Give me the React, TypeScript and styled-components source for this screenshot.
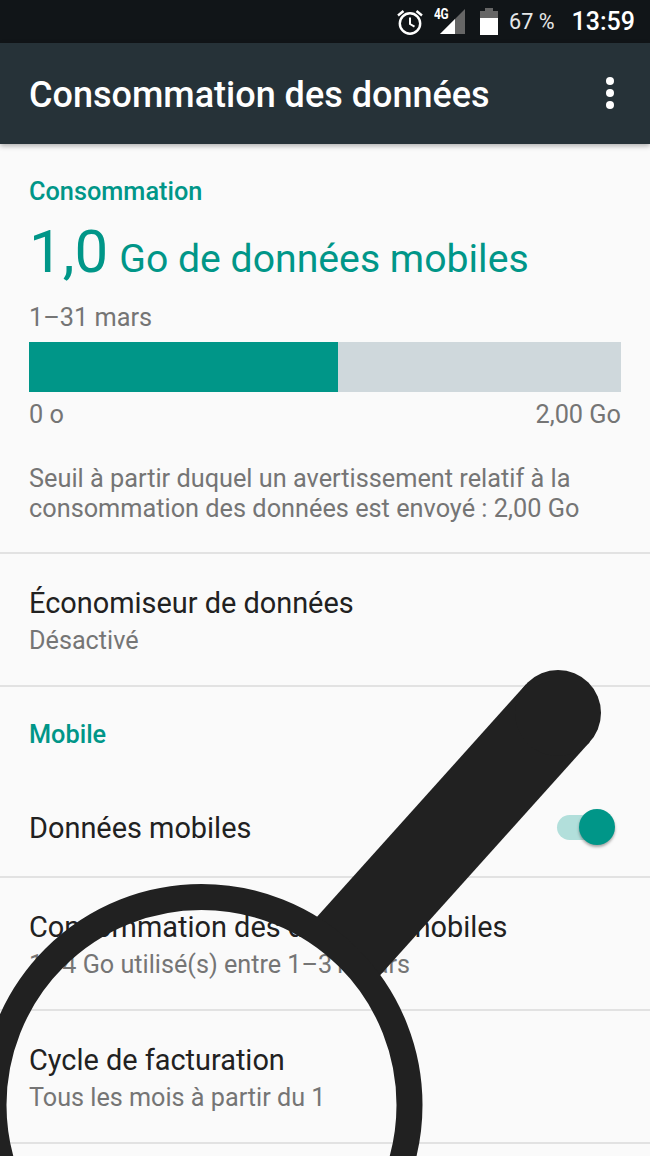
import styled, { createGlobalStyle } from 'styled-components';

const GlobalStyle = createGlobalStyle`
  html, body {
    margin: 0;
    padding: 0;
    background: #fafafa;
  }
  * {
    box-sizing: border-box;
  }
`;

const Screen = styled.div`
  position: relative;
  width: 650px;
  height: 1156px;
  overflow: hidden;
  background: #fafafa;
  font-family: Roboto, "Noto Sans", sans-serif;
`;

const StatusBar = styled.div`
  height: 43px;
  background: #111518;
  color: #fff;
  display: flex;
  align-items: center;
  justify-content: flex-end;
  padding-right: 15px;
`;

const AlarmIcon = styled.svg`
  width: 28px;
  height: 28px;
  margin-right: 9px;
`;

const NetworkIcon = styled.div`
  position: relative;
  width: 32px;
  height: 26px;
  margin-right: 15px;
`;

const NetworkLabel = styled.span`
  position: absolute;
  left: 1px;
  top: -1px;
  font-size: 14px;
  font-weight: 700;
  line-height: 13px;
  letter-spacing: -0.5px;
  transform: scaleX(0.85);
  transform-origin: left center;
`;

const SignalSvg = styled.svg`
  position: absolute;
  right: 0;
  top: 0;
  width: 25px;
  height: 26px;
`;

const BatteryIcon = styled.svg`
  width: 18px;
  height: 27px;
  margin-right: 11px;
`;

const BatteryText = styled.span`
  font-size: 21.6px;
  color: #e6e8e9;
  margin-right: 17px;
`;

const Clock = styled.span`
  font-size: 25px;
  font-weight: 500;
`;

const AppBar = styled.header`
  height: 101px;
  background: #263238;
  display: flex;
  align-items: center;
  justify-content: space-between;
  padding: 3px 36px 0 29px;
  box-shadow: 0 2px 5px rgba(0, 0, 0, 0.3);
  position: relative;
`;

const Title = styled.h1`
  margin: 0;
  font-size: 36px;
  font-weight: 500;
  color: #fff;
`;

const MoreDots = styled.div`
  display: flex;
  flex-direction: column;
  gap: 4px;
  margin-top: -4px;
`;

const Dot = styled.span`
  width: 8px;
  height: 8px;
  border-radius: 50%;
  background: #fff;
`;

const UsageSection = styled.section`
  height: 410px;
  padding: 34px 29px 0;
  border-bottom: 2px solid #e2e2e2;
`;

const SectionLabel = styled.div`
  font-size: 25.3px;
  line-height: 28px;
  font-weight: 500;
  color: #009688;
`;

const UsageLine = styled.div`
  display: flex;
  align-items: baseline;
  gap: 11px;
  color: #009688;
  margin-top: 13px;
  height: 72px;
`;

const UsageValue = styled.span`
  font-size: 60px;
  line-height: 66px;
`;

const UsageUnit = styled.span`
  font-size: 39.2px;
`;

const Period = styled.div`
  font-size: 25.3px;
  line-height: 28px;
  color: #757575;
  margin-top: 13px;
`;

const Bar = styled.div`
  height: 50px;
  background: #cfd8dc;
  margin-top: 10px;
`;

const BarFill = styled.div<{ $pct: number }>`
  height: 100%;
  width: ${(p) => p.$pct}%;
  background: #009688;
`;

const BarScale = styled.div`
  display: flex;
  justify-content: space-between;
  font-size: 25.3px;
  line-height: 28px;
  color: #757575;
  margin-top: 9px;
`;

const Warning = styled.p`
  margin: 35px 0 0;
  font-size: 25.3px;
  line-height: 29.5px;
  color: #757575;
`;

const Row = styled.div<{ $height: number; $center?: boolean }>`
  height: ${(p) => p.$height}px;
  padding: ${(p) => (p.$center ? '0 29px' : '2px 29px 0')};
  border-bottom: 2px solid #e2e2e2;
  display: flex;
  flex-direction: ${(p) => (p.$center ? 'row' : 'column')};
  justify-content: ${(p) => (p.$center ? 'space-between' : 'center')};
  align-items: ${(p) => (p.$center ? 'center' : 'stretch')};
`;

const RowTitle = styled.div`
  font-size: 28.9px;
  line-height: 34px;
  color: #212121;
`;

const RowSub = styled.div`
  font-size: 25.2px;
  line-height: 28px;
  color: #757575;
  margin-top: 7px;
`;

const MobileHeader = styled.div`
  height: 93px;
  padding: 34px 29px 0;
`;

const Switch = styled.div`
  position: relative;
  width: 50px;
  height: 25px;
  margin: -2px 14px 0 0;
  border-radius: 13px;
  background: #b2dfdb;
`;

const SwitchThumb = styled.span`
  position: absolute;
  right: -8px;
  top: -6px;
  width: 36px;
  height: 36px;
  border-radius: 50%;
  background: #009688;
  box-shadow: 0 2px 3px rgba(0, 0, 0, 0.35);
`;

const Magnifier = styled.svg`
  position: absolute;
  left: 0;
  top: 0;
  width: 650px;
  height: 1156px;
  pointer-events: none;
`;

export default function App() {
  return (
    <Screen>
      <GlobalStyle />
      <StatusBar>
        <AlarmIcon viewBox="0 0 28 28" fill="none" stroke="#fff" strokeWidth="2.4">
          <circle cx="14" cy="15.5" r="10.2" />
          <path d="M14 9.5v6.5l4.5 2.6" strokeWidth="2" />
          <path d="M2 7.5L7.5 3M26 7.5L20.5 3" />
        </AlarmIcon>
        <NetworkIcon>
          <NetworkLabel>4G</NetworkLabel>
          <SignalSvg viewBox="0 0 25 26">
            <path d="M0 25L25 0V25Z" fill="#666" />
            <path d="M0 25L15 10V25Z" fill="#fff" />
          </SignalSvg>
        </NetworkIcon>
        <BatteryIcon viewBox="0 0 18 27">
          <path d="M5 0h8v3h5v24H0V3h5Z" fill="#666" />
          <path d="M0 10h18v17H0Z" fill="#fff" />
        </BatteryIcon>
        <BatteryText>67 %</BatteryText>
        <Clock>13:59</Clock>
      </StatusBar>

      <AppBar>
        <Title>Consommation des données</Title>
        <MoreDots>
          <Dot />
          <Dot />
          <Dot />
        </MoreDots>
      </AppBar>

      <UsageSection>
        <SectionLabel>Consommation</SectionLabel>
        <UsageLine>
          <UsageValue>1,0</UsageValue>
          <UsageUnit>Go de données mobiles</UsageUnit>
        </UsageLine>
        <Period>1–31 mars</Period>
        <Bar>
          <BarFill $pct={52.2} />
        </Bar>
        <BarScale>
          <span>0 o</span>
          <span>2,00 Go</span>
        </BarScale>
        <Warning>
          Seuil à partir duquel un avertissement relatif à la
          <br />
          consommation des données est envoyé : 2,00 Go
        </Warning>
      </UsageSection>

      <Row $height={133}>
        <RowTitle>Économiseur de données</RowTitle>
        <RowSub>Désactivé</RowSub>
      </Row>

      <MobileHeader>
        <SectionLabel>Mobile</SectionLabel>
      </MobileHeader>

      <Row $height={98} $center>
        <RowTitle>Données mobiles</RowTitle>
        <Switch>
          <SwitchThumb />
        </Switch>
      </Row>

      <Row $height={133}>
        <RowTitle>Consommation des données mobiles</RowTitle>
        <RowSub>1,04 Go utilisé(s) entre 1–31 mars</RowSub>
      </Row>

      <Row $height={133}>
        <RowTitle>Cycle de facturation</RowTitle>
        <RowSub>Tous les mois à partir du 1</RowSub>
      </Row>

      <Magnifier viewBox="0 0 650 1156">
        <path d="M558 713L345 950" stroke="#212121" strokeWidth="86" fill="none" />
        <circle cx="558" cy="713" r="43" fill="#212121" />
        <circle cx="201.5" cy="1105" r="208" fill="none" stroke="#212121" strokeWidth="26" />
      </Magnifier>
    </Screen>
  );
}
